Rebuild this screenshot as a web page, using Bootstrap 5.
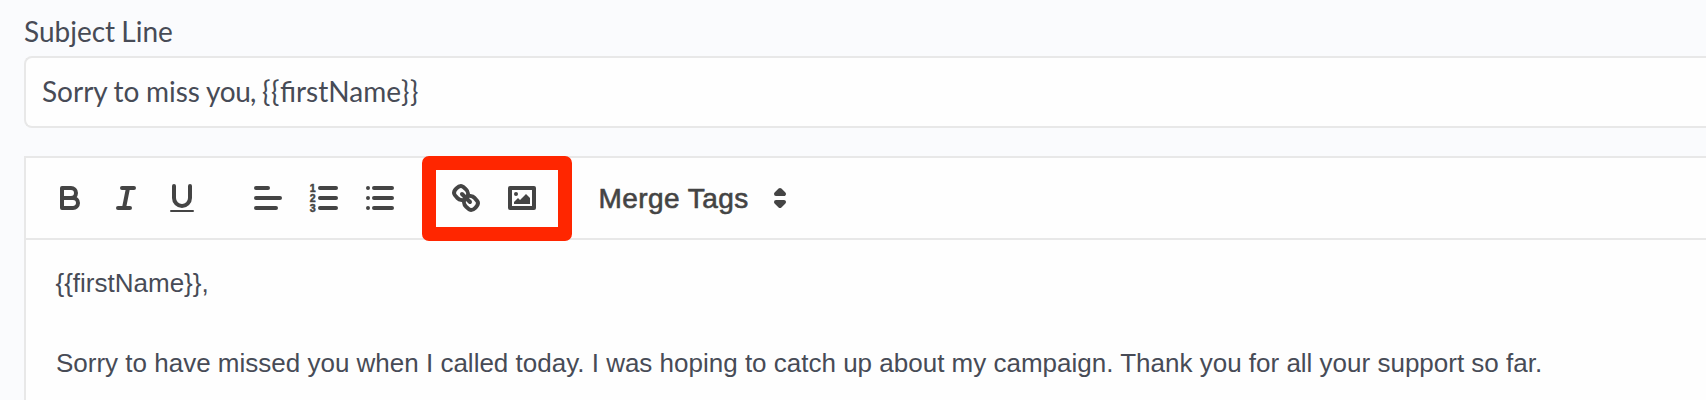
<!DOCTYPE html>
<html lang="en">
<head>
<meta charset="utf-8">
<title>Email template</title>
<link rel="stylesheet" href="https://cdn.jsdelivr.net/npm/bootstrap@5.3.0/dist/css/bootstrap.min.css">
<style>
body{background:#fafbfd;color:#474b56;height:400px}
.page-wrap{height:400px;padding:13px 0 0 24px}
.subject-label{font:28px/36px Lato,sans-serif;height:43px;word-spacing:-1px}
.subject-input.form-control{font:28px/36px Lato,sans-serif;color:#474b56;height:72px;border:2px solid #e8e8e8;border-right:0;border-radius:8px 0 0 8px;background:#fefefe;padding:0 16px 2px;white-space:pre;word-spacing:-.7px}
.tight{letter-spacing:-.4px;margin-left:-.3px}
.comma{margin-left:-.5px}
.brace{letter-spacing:.6px}
.editor{margin-top:28px;border:2px solid #e8e8e8;border-right:0;border-bottom:0;background:#fefefe;height:300px}
.tools{height:82px;border-bottom:2px solid #e8e8e8;padding-left:26px}
.tool-set{gap:20px;margin-right:50px}
.tools svg{width:36px;height:36px;display:block;fill:none;stroke:#444;stroke-width:2;stroke-linecap:round;stroke-linejoin:round}
.tools svg .solid{fill:#444;stroke:none}
.tools svg .both{fill:#444}
.tools svg text{font:bold 5.3px "Liberation Sans",sans-serif;fill:#444;stroke:#444;stroke-width:.25}
.highlight{left:-26px;top:-24px;width:150px;height:85px;border:14px solid #ff2600;border-radius:7px}
.merge{font:28px/36px "Liberation Sans",sans-serif;letter-spacing:.45px;color:#444;-webkit-text-stroke:.6px #444;width:163.5px;margin-left:8.5px;padding-top:2px;white-space:nowrap}
.message{font:26px/40px "Liberation Sans",sans-serif;padding:23px 30px;white-space:nowrap}
.message p{margin:0 0 40px}
.message p:first-child{margin-left:-.5px}
</style>
<script src="https://cdn.jsdelivr.net/npm/bootstrap@5.3.0/dist/js/bootstrap.bundle.min.js"></script>
</head>
<body class="overflow-hidden">
<main class="page-wrap overflow-hidden">
  <div class="subject-label">Subject Line</div>
  <div class="subject-input form-control d-flex align-items-center"><div>Sorry to miss <span class="tight">you<span class="comma">, </span></span><span class="brace">{{</span>firstName<span class="brace">}}</span></div></div>
  <section class="editor">
    <div class="tools d-flex align-items-center">
      <div class="tool-set d-flex">
        <svg viewBox="0 0 18 18"><path d="M5,4H9.5A2.5,2.5,0,0,1,12,6.5v0A2.5,2.5,0,0,1,9.5,9H5A0,0,0,0,1,5,9V4Z"/><path d="M5,9h5.5A2.5,2.5,0,0,1,13,11.5v0A2.5,2.5,0,0,1,10.5,14H5V9Z"/></svg>
        <svg viewBox="0 0 18 18"><path d="M7,4H13M5,14H11M8,14L10,4"/></svg>
        <svg viewBox="0 0 18 18"><path d="M5,3V9a4.012,4.012,0,0,0,4,4H9a4.012,4.012,0,0,0,4-4V3"/><rect class="solid" x="3" y="15" width="12" height="1" rx=".5"/></svg>
      </div>
      <div class="tool-set d-flex">
        <svg viewBox="0 0 18 18"><path d="M3,4H9M3,9H15M3,14H13"/></svg>
        <svg viewBox="0 0 18 18"><path d="M7,4H15M7,9H15M7,14H15"/><text x="1.9" y="6.1">1</text><text x="1.9" y="11.1">2</text><text x="1.9" y="16.1">3</text></svg>
        <svg viewBox="0 0 18 18"><path d="M6,4H15M6,9H15M6,14H15M3,4h0M3,9h0M3,14h0"/></svg>
      </div>
      <div class="tool-set d-flex position-relative">
        <svg viewBox="0 0 18 18"><path d="M7,7L11,11"/><path d="M8.9,4.577a3.476,3.476,0,0,1,.36,4.679A3.476,3.476,0,0,1,4.577,8.9C3.185,7.5,2.035,6.4,4.217,4.217S7.5,3.185,8.9,4.577Z"/><path d="M13.423,9.1a3.476,3.476,0,0,0-4.679-.36,3.476,3.476,0,0,0,.36,4.679c1.392,1.392,2.5,2.542,4.679.36S14.815,10.5,13.423,9.1Z"/></svg>
        <svg viewBox="0 0 18 18"><rect x="3" y="4" width="12" height="10"/><circle class="solid" cx="6" cy="7" r="1"/><path class="solid" d="M5,12V11L7,9L8,10L11,7L13,9V12Z"/></svg>
        <div class="highlight position-absolute"></div>
      </div>
      <div class="merge">Merge Tags</div>
      <svg viewBox="0 0 18 18"><path class="both" d="M7,11L9,13L11,11ZM7,7L9,5L11,7Z"/></svg>
    </div>
    <div class="message"><p>{{firstName}},</p><p>Sorry to have missed you when I called today. I was hoping to catch up about my campaign. Thank you for all your support so far.</p></div>
  </section>
</main>
</body>
</html>
